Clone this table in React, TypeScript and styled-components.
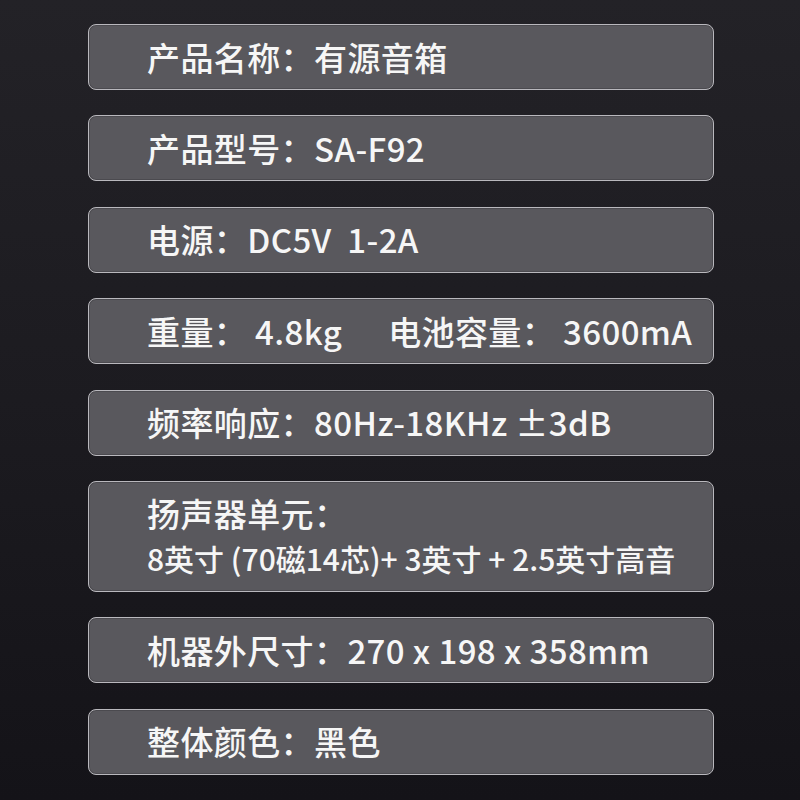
import styled, { createGlobalStyle } from "styled-components";

const GlobalStyle = createGlobalStyle`
  html, body {
    margin: 0;
    padding: 0;
  }
  body {
    background: #1b1a1f;
    font-family: "Noto Sans CJK SC", "Noto Sans", sans-serif;
  }
`;

const Page = styled.div`
  width: 800px;
  height: 800px;
  box-sizing: border-box;
  padding: 24px 86px 0 88px;
  display: flex;
  flex-direction: column;
  gap: 25.4px;
  background: linear-gradient(180deg, #232227 0%, #1c1b20 50%, #141318 100%);
`;

const Card = styled.div<{ $tall?: boolean }>`
  box-sizing: border-box;
  flex: none;
  height: ${(p) => (p.$tall ? "111px" : "66px")};
  border: 1.5px solid #b9b8bd;
  border-radius: 8px;
  background: #59585d;
  padding: 0 0 0 58px;
  display: flex;
  flex-direction: column;
  justify-content: center;
  color: #f6f6f6;
  box-shadow: inset 0 0 0 1px rgba(0, 0, 0, 0.15);
`;

const Line = styled.div<{ $small?: boolean }>`
  font-size: ${(p) => (p.$small ? "30px" : "33px")};
  font-weight: 500;
  line-height: 45px;
  letter-spacing: ${(p) => (p.$small ? "0" : "0.4px")};
  white-space: pre;
`;

const Spacer = styled.span`
  display: inline-block;
  width: 46px;
`;

function App() {
  return (
    <>
      <GlobalStyle />
      <Page>
        <Card>
          <Line>产品名称：有源音箱</Line>
        </Card>
        <Card>
          <Line>产品型号：SA-F92</Line>
        </Card>
        <Card>
          <Line>电源：DC5V  1-2A</Line>
        </Card>
        <Card>
          <Line>
            重量： 4.8kg
            <Spacer />
            电池容量： 3600mA
          </Line>
        </Card>
        <Card>
          <Line>频率响应：80Hz-18KHz ±3dB</Line>
        </Card>
        <Card $tall>
          <Line>扬声器单元：</Line>
          <Line $small>8英寸 (70磁14芯)+ 3英寸 + 2.5英寸高音</Line>
        </Card>
        <Card>
          <Line>机器外尺寸：270 x 198 x 358mm</Line>
        </Card>
        <Card>
          <Line>整体颜色：黑色</Line>
        </Card>
      </Page>
    </>
  );
}

export default App;
